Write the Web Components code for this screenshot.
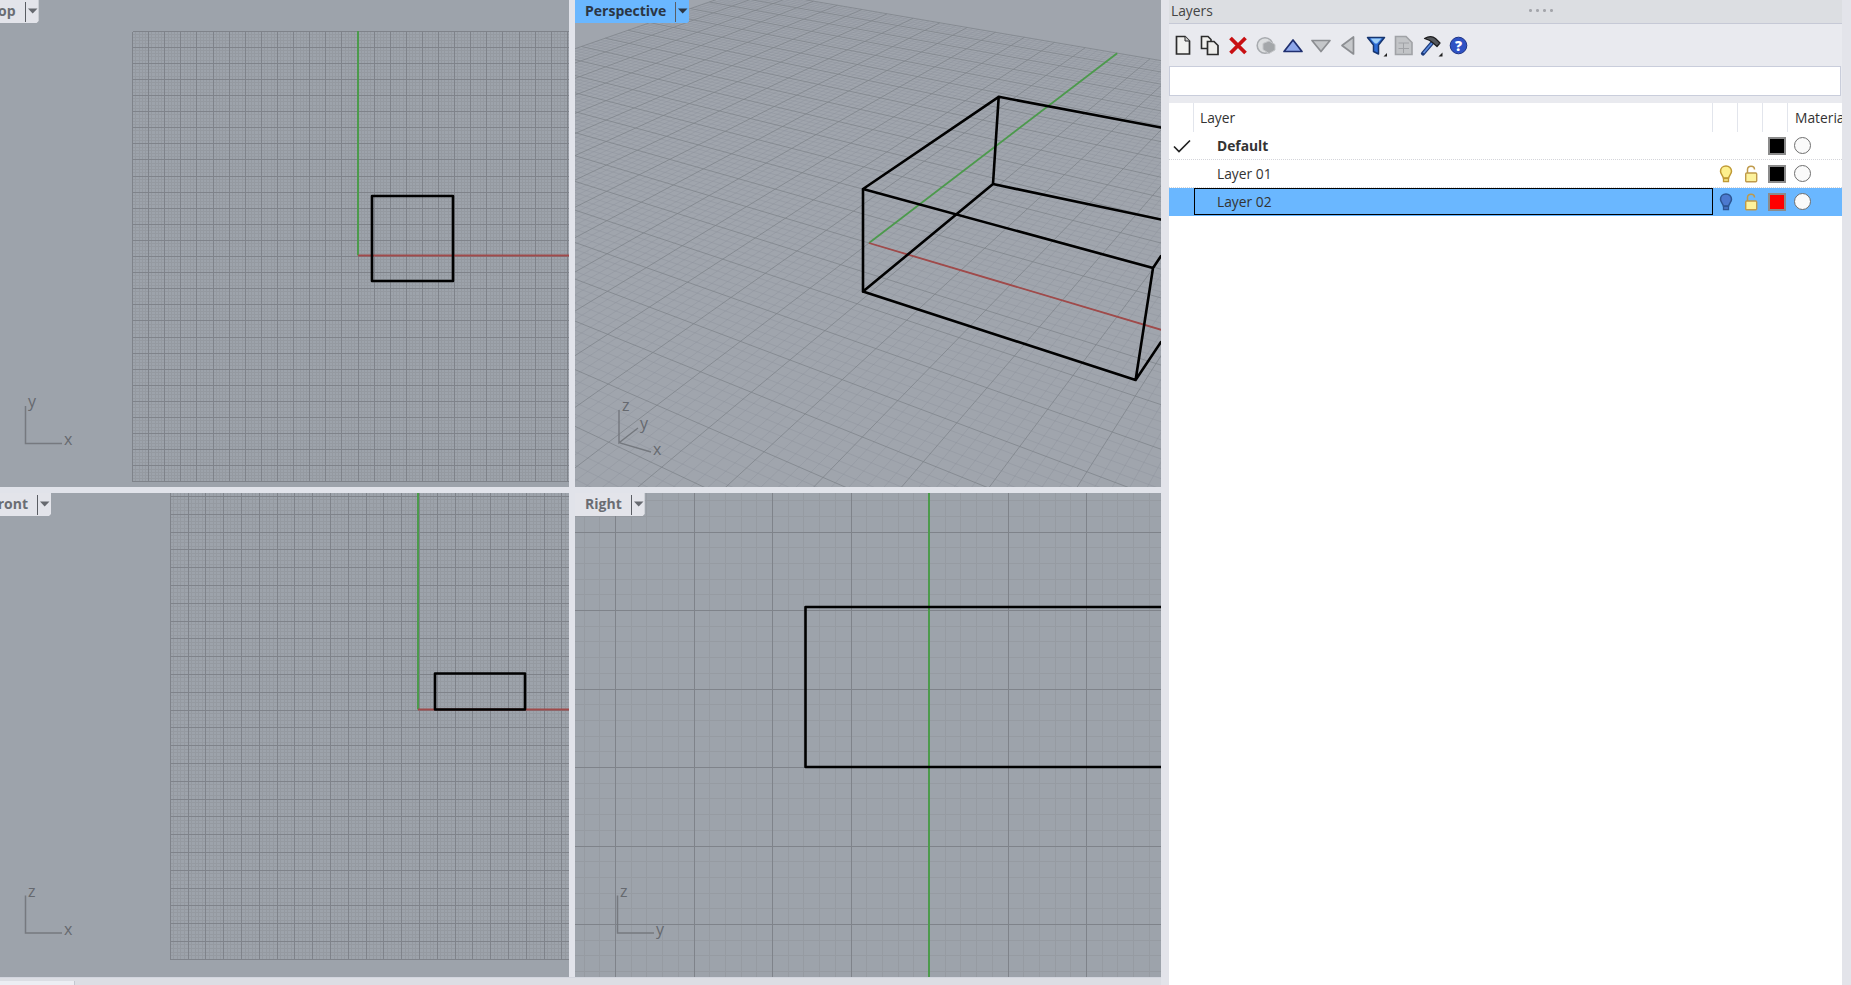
<!DOCTYPE html>
<html>
<head>
<meta charset="utf-8">
<title>Layers</title>
<style>
    html, body { margin: 0; height: 100%; overflow: hidden; background: #e3e4ea; }
    body { font-family: "Open Sans", "Liberation Sans", sans-serif; }
</style>
</head>
<body>
<rhino-shell>
    <rhino-viewport slot="views" view="top" label="Top" shift="-20"></rhino-viewport>
    <rhino-viewport slot="views" view="perspective" label="Perspective" active></rhino-viewport>
    <rhino-viewport slot="views" view="front" label="Front" shift="-20"></rhino-viewport>
    <rhino-viewport slot="views" view="right" label="Right"></rhino-viewport>
    <layers-panel slot="panel">
        <layer-row current bold name="Default" swatch="#000"></layer-row>
        <layer-row name="Layer 01" swatch="#000" toggles="yellow"></layer-row>
        <layer-row name="Layer 02" swatch="#f00" toggles="blue" selected></layer-row>
    </layers-panel>
</rhino-shell>

<script>
// Page frame: four viewports on the left, the panel on the right
class RhinoShell extends HTMLElement {
    constructor() {
        super();
        this.attachShadow({ mode: 'open' });
        this.shadowRoot.innerHTML = `
            <style>
                :host { display: flex; width: 1851px; height: 985px; background: #e3e4ea; }
                .left { width: 1161px; display: flex; flex-direction: column; }
                .views {
                    display: grid;
                    grid-template-columns: 569px 586px;
                    grid-template-rows: 487px 484px;
                    gap: 6px;
                    background: #e1e3ea;
                }
                .strip { height: 8px; background: #dcdee4; border-top: 1px solid #d2d5de; box-sizing: border-box; display: flex; align-items: flex-end; }
                .strip i { display: block; width: 74px; height: 4px; background: #eceef3; border-right: 1px solid #c4c8d0; }
                .panel { margin-left: 8px; width: 673px; }
                .edge { width: 9px; }
            </style>
            <div class="left">
                <div class="views"><slot name="views"></slot></div>
                <div class="strip"><i></i></div>
            </div>
            <div class="panel"><slot name="panel"></slot></div>
            <div class="edge"></div>
        `;
    }
}

// Solve the plane homography from four world -> screen point pairs
function solveHomography(pairs) {
    const m = [];
    pairs.forEach(([x, y, u, v]) => {
        m.push([x, y, 1, 0, 0, 0, -u * x, -u * y, u]);
        m.push([0, 0, 0, x, y, 1, -v * x, -v * y, v]);
    });
    for (let i = 0; i < 8; i++) {
        let p = i;
        for (let r = i + 1; r < 8; r++) if (Math.abs(m[r][i]) > Math.abs(m[p][i])) p = r;
        [m[i], m[p]] = [m[p], m[i]];
        for (let r = 0; r < 8; r++) {
            if (r === i) continue;
            const f = m[r][i] / m[i][i];
            for (let c = i; c < 9; c++) m[r][c] -= f * m[i][c];
        }
    }
    return m.map((row, i) => row[8] / row[i]);
}

function perspectiveLine(h, ax, ay, bx, by) {
    const w = (x, y) => h[6] * x + h[7] * y + 1;
    let wa = w(ax, ay), wb = w(bx, by);
    const eps = 0.04;
    if (wa < eps && wb < eps) return '';
    if (wa < eps) { const t = (eps - wa) / (wb - wa); ax += (bx - ax) * t; ay += (by - ay) * t; wa = eps; }
    if (wb < eps) { const t = (eps - wb) / (wa - wb); bx += (ax - bx) * t; by += (ay - by) * t; wb = eps; }
    const px = (x, y, k) => ((h[0] * x + h[1] * y + h[2]) / k).toFixed(1) + ' ' + ((h[3] * x + h[4] * y + h[5]) / k).toFixed(1);
    return `M${px(ax, ay, wa)}L${px(bx, by, wb)}`;
}

function perspectiveScene() {
    // screen points are local to the viewport, which starts at x = 575
    const h = solveHomography([
        [0, 0, 294, 243],
        [0.87, -1.6, 288, 291.6],
        [5.87, -1.6, 560.6, 380],
        [0.87, 3.66, 417, 185]
    ]);
    let minor = '', major = '';
    for (let i = -70; i <= 70; i++) {
        const v = i / 5;
        const a = perspectiveLine(h, v, -14, v, 14) + perspectiveLine(h, -14, v, 14, v);
        if (i % 5 === 0) major += a; else minor += a;
    }
    const box = [
        [288, 291.6, 288, 189], [288, 189, 578, 268], [288, 291.6, 560.6, 380], [560.6, 380, 578, 268],
        [288, 189, 423.7, 96.8], [423.7, 96.8, 418, 184], [288, 291.6, 418, 184],
        [423.7, 96.8, 586, 127.5], [418, 184, 586, 219.6], [578, 268, 586, 256], [560.6, 380, 586, 342]
    ].map(l => `M${l[0]} ${l[1]}L${l[2]} ${l[3]}`).join('');
    return `
        <path d="${minor}" stroke="#8d929a" stroke-opacity=".4" fill="none"/>
        <path d="${major}" stroke="#7e838a" stroke-opacity=".75" fill="none"/>
        <path d="${perspectiveLine(h, 0, 0, 0, 14)}" stroke="#4c9a4c" stroke-width="1.8" fill="none"/>
        <path d="${perspectiveLine(h, 0, 0, 14, 0)}" stroke="#a04a4a" stroke-width="1.8" fill="none"/>
        <path d="${box}" stroke="#000" stroke-width="2.6" stroke-linecap="round" fill="none"/>
        <path d="M44 410V442.7L63 428M44 442.7L76 452" stroke="#74787e" stroke-width="1.4" fill="none"/>
        <text x="47" y="411" class="axis">z</text>
        <text x="65" y="429" class="axis">y</text>
        <text x="78" y="455" class="axis">x</text>
    `;
}

function orthoGrid(ox, oy, major, x0, y0, x1, y1, minorColor) {
    let minor = '', main = '';
    for (let i = -70; i <= 70; i++) {
        const x = Math.round(ox + i * major / 5) + .5;
        const y = Math.round(oy - i * major / 5) + .5;
        const ln = (x >= x0 && x <= x1 ? `M${x} ${y0}V${y1}` : '') + (y >= y0 && y <= y1 ? `M${x0} ${y}H${x1}` : '');
        if (i % 5 === 0) main += ln; else minor += ln;
    }
    return `
        <g shape-rendering="crispEdges" fill="none">
            <path d="${minor}" stroke="${minorColor}"/>
            <path d="${main}" stroke="#7f838a"/>
        </g>`;
}

function cornerAxes(cx, cy, a, b) {
    return `
        <path d="M${cx + .5} ${cy - 37}V${cy + .5}H${cx + 37}" stroke="#76797f" stroke-width="1.5" fill="none"/>
        <text x="${cx + 3}" y="${cy - 36}" class="axis">${a}</text>
        <text x="${cx + 39}" y="${cy + 2}" class="axis">${b}</text>`;
}

function rectPath(x0, y0, x1, y1) {
    return `<path d="M${x0} ${y0}H${x1}V${y1}H${x0}Z" stroke="#000" stroke-width="2.6" stroke-linejoin="round" fill="none"/>`;
}

const viewScenes = {
    top() {
        return orthoGrid(357.5, 256, 16.1, 132.5, 31.5, 569, 481.5, '#959aa1')
            + `<path d="M358 31V255.5" stroke="#4c9a4c" stroke-width="2"/><path d="M358 255.5H569" stroke="#a04a4a" stroke-width="1.8"/>`
            + rectPath(372, 196, 453, 281)
            + cornerAxes(25, 443, 'y', 'x');
    },
    perspective: perspectiveScene,
    front() {
        // local y = page y - 493
        return orthoGrid(419, 216.5, 17.8, 170.5, 0, 569, 466.5, '#959aa1')
            + `<path d="M418 0V216.5" stroke="#4c9a4c" stroke-width="2"/><path d="M418 216.5H569" stroke="#a04a4a" stroke-width="1.8"/>`
            + rectPath(435, 180.5, 525, 216.5)
            + cornerAxes(25, 439.5, 'z', 'x');
    },
    right() {
        return orthoGrid(354, 274, 78.5, 0, 0, 586, 484, '#969ba2')
            + `<path d="M354 0V484" stroke="#4c9a4c" stroke-width="2"/>`
            + rectPath(230.5, 114, 600, 274)
            + cornerAxes(42, 439.5, 'z', 'y');
    }
};

class RhinoViewport extends HTMLElement {
    connectedCallback() {
        const label = this.getAttribute('label');
        const shift = this.getAttribute('shift') || 0;
        const view = this.getAttribute('view');
        const scene = viewScenes[view]();
        const width = view === 'right' || view === 'perspective' ? 586 : 569;
        const height = view === 'top' || view === 'perspective' ? 487 : 484;
        this.attachShadow({ mode: 'open' });
        this.shadowRoot.innerHTML = `
            <style>
                :host { display: block; position: relative; overflow: hidden; background: #9da3ab; }
                :host([view="perspective"]) { background: #a0a5ad; }
                svg { display: block; width: 100%; height: 100%; }
                .axis { font: 16px "Open Sans", sans-serif; fill: #66696f; }
                .tab {
                    position: absolute; top: 0; left: ${shift}px;
                    display: flex; align-items: center; height: 23px;
                    padding-left: 10px;
                    background: #e3e4ea; color: #6a6d73;
                    font: 700 14px "Open Sans", sans-serif; white-space: nowrap;
                    clip-path: polygon(0 0, 100% 0, 100% calc(100% - 2px), calc(100% - 2px) 100%, 0 100%);
                }
                :host([active]) .tab { background: #6ab7ff; color: #2b3644; }
                .tab b { font-weight: 700; padding: 0 9px 2px 0; }
                .tab i { display: block; width: 1px; height: 20px; background: #5a5d63; }
                .tab svg { width: 13px; height: 8px; margin-bottom: 2px; }
            </style>
            <svg viewBox="0 0 ${width} ${height}" preserveAspectRatio="none">${scene}</svg>
            <div class="tab">
                <b>${label}</b><i></i>
                <svg viewBox="0 0 13 8"><path d="M2 1.5H11.5L6.7 6.5Z" fill="${this.hasAttribute('active') ? '#2b3644' : '#66696f'}"/></svg>
            </div>
        `;
    }
}

// Toolbar drawings, in order
const toolIcons = [
    `<path d="M3.5 1.5H12L16.5 6V19H3.5Z" fill="#f0f0ee" stroke="#2c2c2c" stroke-width="1.7"/><path d="M12 1.5V6H16.5" fill="#ccc" stroke="#2c2c2c"/>`,
    `<path d="M1.5 1.5H8L11 4.5V13.5H1.5Z" fill="#f0f0ee" stroke="#2c2c2c" stroke-width="1.6"/><path d="M7.5 6.5H14L18 10.5V19.5H7.5Z" fill="#ececea" stroke="#2c2c2c" stroke-width="1.7"/>`,
    `<path d="M2.5 3L17.5 18M17.5 3L2.5 18" stroke="#c80f12" stroke-width="3.8"/>`,
    `<circle cx="9" cy="10.5" r="7.8" fill="#dcdee0" stroke="#a8abaf" stroke-width="1.6"/><path d="M7 8.5L13 6L19 9.5V15L13 18.5L7 14.5Z" fill="#a4a7aa" stroke="#c4c6c9"/>`,
    `<path d="M10 5L19 16.5H1Z" fill="#8ea7ea" stroke="#1f2f6f" stroke-width="1.7" stroke-linejoin="round"/>`,
    `<path d="M1 5.5H19L10 16.5Z" fill="#c4c6c9" stroke="#8c8e92" stroke-width="1.7" stroke-linejoin="round"/>`,
    `<path d="M15.5 2V19L4 10.5Z" fill="#c6c8cb" stroke="#8c8e92" stroke-width="1.7" stroke-linejoin="round"/>`,
    `<path d="M1.5 2.5H18.5L12.5 10V19L7.5 16.5V10Z" fill="#2d6cd6" stroke="#16356f" stroke-width="1.5" stroke-linejoin="round"/><path d="M4.5 3.5H15.5L11 8.5H9Z" fill="#9fd0f8"/><path d="M21 18V21.5H17.5Z" fill="#222"/>`,
    `<path d="M1.5 1.5H12L18 7.5V19.5H1.5Z" fill="#c2c4c7" stroke="#a0a2a6" stroke-width="1.6"/><path d="M4.5 8H15M4.5 13.5H15M9.5 8V18" stroke="#a0a2a6"/>`,
    `<path d="M2 18.5L11 8" stroke="#1d3a7a" stroke-width="4.2" stroke-linecap="round"/><path d="M2.5 18L11 8" stroke="#5a8ade" stroke-width="1.8"/><path d="M3.5 3.5C8 1 12 1.5 14.5 3.5L19 8L16 11.5L11.5 7.5C9.5 5.5 7 4.5 3.5 3.5Z" fill="#55585d" stroke="#1c1c1e" stroke-width="1.2" stroke-linejoin="round"/><path d="M21.5 17.5V21.5H17.5Z" fill="#222"/>`,
    `<circle cx="9.5" cy="10.5" r="8.3" fill="#2f52c4" stroke="#1c3284"/><text x="9.5" y="15.5" text-anchor="middle" font-family="Open Sans, sans-serif" font-weight="800" font-size="14" fill="#fff">?</text>`
];

class ToolButton extends HTMLElement {
    constructor() {
        super();
        this.attachShadow({ mode: 'open' });
        this.shadowRoot.innerHTML = `
            <style>
                :host { display: flex; width: 27.6px; height: 42px; align-items: center; justify-content: center; }
            </style>
            <slot></slot>
        `;
    }
}

class LayersPanel extends HTMLElement {
    constructor() {
        super();
        this.attachShadow({ mode: 'open' });
        this.shadowRoot.innerHTML = `
            <style>
                :host {
                    display: flex; flex-direction: column; height: 985px;
                    background: #fff; color: #333;
                    font: 13.8px "Open Sans", sans-serif;
                }
                .title {
                    height: 23px; flex: none; display: flex; align-items: center; box-sizing: content-box;
                    padding: 0 0 0 2px; background: #dcdee2; border-bottom: 1px solid #c6c9d6; color: #444;
                    position: relative;
                }
                .title span { padding-bottom: 3px; }
                .grip { position: absolute; left: 360px; top: 9px; width: 26px; height: 3px;
                    background: radial-gradient(circle at 1.5px 1.5px, #a4a6ab 1.3px, transparent 1.6px) 0 0 / 7px 3px; }
                .tools { height: 42px; flex: none; display: flex; background: #e9eaef; }
                .tools svg { width: 20px; height: 21px; overflow: visible; display: block; }
                .search { flex: none; background: #e9eaef; padding-bottom: 7px; }
                .search input {
                    display: block; width: 672px; height: 30px; box-sizing: border-box; margin: 0;
                    background: #fff; border: 1px solid #c9cddb; outline: none;
                }
                .head {
                    flex: none; height: 29px; display: grid;
                    grid-template-columns: 25px 519px 25px 25px 25px 54px; overflow: hidden;
                }
                .head span { border-right: 1px solid #e2e5ec; padding-left: 6px; line-height: 29px; white-space: nowrap; overflow: hidden; box-sizing: border-box; }
                .head span:last-child { border-right: 0; padding-left: 7px; }
                .head .sm { padding: 0; }
            </style>
            <div class="title"><span>Layers</span><div class="grip"></div></div>
            <div class="tools">
                ${toolIcons.map(d => `<tool-button><svg viewBox="0 0 20 21">${d}</svg></tool-button>`).join('')}
            </div>
            <div class="search"><input type="text"></div>
            <div class="head">
                <span class="sm"></span><span>Layer</span><span class="sm"></span><span class="sm"></span><span class="sm"></span><span>Material</span>
            </div>
            <slot></slot>
        `;
    }
}

class LayerRow extends HTMLElement {
    connectedCallback() {
        const name = this.getAttribute('name');
        const swatch = this.getAttribute('swatch');
        const toggles = this.getAttribute('toggles');
        const bulbFill = toggles === 'blue' ? '#4c79cf' : '#fdf08e';
        const bulbStroke = toggles === 'blue' ? '#2d5593' : '#c09a35';
        const bulb = `<svg viewBox="0 0 14 18" width="14" height="18"><path d="M7 1C3.8 1 1.5 3.2 1.5 6.2C1.5 9 3.8 10.5 4.4 13H9.6C10.2 10.5 12.5 9 12.5 6.2C12.5 3.2 10.2 1 7 1Z" fill="${bulbFill}" stroke="${bulbStroke}" stroke-width="1.5"/><path d="M4.5 13.5H9.5V16.5H4.5Z" fill="${bulbFill}" stroke="${bulbStroke}" stroke-width="1.3"/></svg>`;
        const lock = `<svg viewBox="0 0 14 18" width="14" height="18"><path d="M3.5 8V4.5C3.5 2.5 5 1.3 7 1.3C9 1.3 10.5 2.5 10.5 4.5" fill="none" stroke="#bf9a4a" stroke-width="1.5"/><rect x="1.7" y="8" width="11" height="8.8" rx="1" fill="#fdf29c" stroke="#bf9a4a" stroke-width="1.4"/></svg>`;
        this.attachShadow({ mode: 'open' });
        this.shadowRoot.innerHTML = `
            <style>
                :host {
                    display: grid; height: 28px; box-sizing: border-box;
                    grid-template-columns: 25px 519px 25px 25px 25px 54px;
                    align-items: center;
                    border-bottom: 1px dotted #d4d5da;
                }
                :host([selected]) { background: #6ab7ff; border-bottom-color: transparent; }
                .check { display: flex; justify-content: center; }
                .name { height: 100%; box-sizing: border-box; padding-left: 23px; line-height: 27px; color: #333; }
                :host([bold]) .name { font-weight: 700; }
                :host([selected]) .name { border: 1px solid #000; padding-left: 22px; line-height: 25px; height: 27px; align-self: start; }
                .cell { display: flex; justify-content: center; align-items: center; }
                .swatch { width: 18px; height: 18px; box-sizing: border-box; border: 2px solid #8b8b8b; margin-left: 3px; }
                .circle { width: 17px; height: 17px; box-sizing: border-box; border-radius: 50%; background: #fafafa; border: 1.5px solid #6f6f6f; }
                .mat { justify-content: flex-start; padding-left: 6px; }
            </style>
            <div class="check">${this.hasAttribute('current') ? `<svg width="20" height="16" viewBox="0 0 20 16"><path d="M2 8.5L7 13.5L18 2.5" fill="none" stroke="#222" stroke-width="1.7"/></svg>` : ''}</div>
            <div class="name">${name}</div>
            <div class="cell">${toggles ? bulb : ''}</div>
            <div class="cell">${toggles ? lock : ''}</div>
            <div class="cell"><div class="swatch" style="background:${swatch}"></div></div>
            <div class="cell mat"><div class="circle"></div></div>
        `;
    }
}

window.customElements.define('rhino-shell', RhinoShell);
window.customElements.define('rhino-viewport', RhinoViewport);
window.customElements.define('tool-button', ToolButton);
window.customElements.define('layers-panel', LayersPanel);
window.customElements.define('layer-row', LayerRow);
</script>
</body>
</html>
